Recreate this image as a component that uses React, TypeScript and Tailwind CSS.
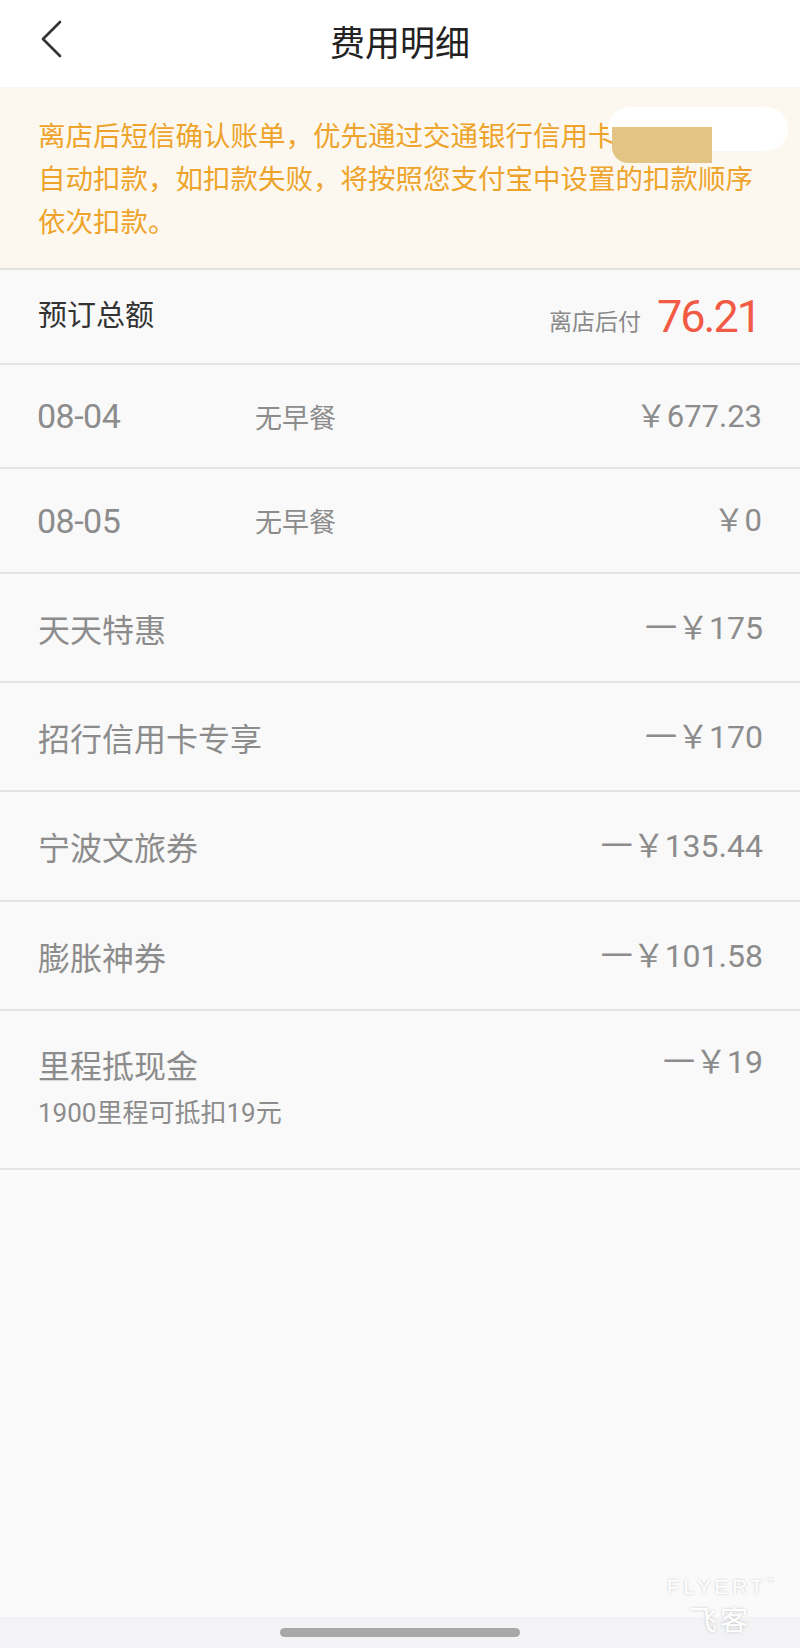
import React from "react";

const CJK = "font-['Noto_Sans_CJK_SC','Noto_Sans',sans-serif]";
const NUM = "font-['Roboto','Noto_Sans_CJK_SC',sans-serif]";

function Row({
  h,
  label,
  amount,
}: {
  h: string;
  label: string;
  amount: string;
}) {
  return (
    <div
      className={`${h} box-border flex items-center justify-between border-b-2 border-[#e4e4e4] pl-[38px] pr-[37px]`}
    >
      <span className={`${CJK} text-[32px] leading-none text-[#8c8c8c]`}>{label}</span>
      <span className={`${NUM} text-[32px] leading-none text-[#8c8c8c]`}>{amount}</span>
    </div>
  );
}

function NightRow({ h, date, amount }: { h: string; date: string; amount: string }) {
  return (
    <div
      className={`${h} box-border flex items-center border-b-2 border-[#e4e4e4] pl-[37px] pr-[38px]`}
    >
      <span className={`${NUM} w-[218px] text-[34px] leading-none tracking-[-0.5px] text-[#8c8c8c]`}>
        {date}
      </span>
      <span className={`${CJK} text-[27px] leading-none text-[#8c8c8c]`}>无早餐</span>
      <span className={`${NUM} ml-auto text-[31px] leading-none text-[#8c8c8c]`}>{amount}</span>
    </div>
  );
}

export default function App() {
  return (
    <div className="relative flex h-[1648px] w-[800px] flex-col overflow-hidden bg-[#f9f9f9]">
      {/* Header */}
      <div className="relative flex h-[87px] shrink-0 items-center justify-center bg-white pb-[6px]">
        <svg
          className="absolute left-[40px] top-[20px]"
          width="22"
          height="38"
          viewBox="0 0 22 38"
          fill="none"
        >
          <polyline
            points="20,2 3,19 20,36"
            stroke="#333333"
            strokeWidth="2.6"
            strokeLinecap="round"
            strokeLinejoin="round"
          />
        </svg>
        <span className={`${CJK} text-[35px] leading-none text-[#222222]`}>费用明细</span>
      </div>

      {/* Notice banner */}
      <div className="relative box-border h-[183px] shrink-0 border-b-2 border-[#e2e2e2] bg-[#fcf8ef] pl-[38px] pt-[26px]">
        <div className={`${CJK} text-[27.5px] leading-[43px] text-[#eea42c]`}>
          <div className="whitespace-nowrap">离店后短信确认账单，优先通过交通银行信用卡</div>
          <div className="whitespace-nowrap">自动扣款，如扣款失败，将按照您支付宝中设置的扣款顺序</div>
          <div className="whitespace-nowrap">依次扣款。</div>
        </div>
        <div className="absolute left-[608px] top-[20px] h-[44px] w-[180px] rounded-[22px] bg-white" />
        <div className="absolute left-[612px] top-[40px] h-[36px] w-[100px] rounded-bl-[16px] bg-[#e3c484]" />
      </div>

      {/* Summary */}
      <div className="box-border flex h-[95px] shrink-0 items-center justify-between border-b-2 border-[#e4e4e4] pl-[38px] pr-[40px]">
        <span className={`${CJK} -mt-[6px] text-[29px] leading-none text-[#333333]`}>预订总额</span>
        <div className="flex items-center gap-[16px]">
          <span className={`${CJK} mt-[8px] text-[23px] leading-none text-[#8a8a8a]`}>离店后付</span>
          <span className={`${NUM} text-[45px] leading-none tracking-[-2px] text-[#f25a46]`}>76.21</span>
        </div>
      </div>

      <NightRow h="h-[104px]" date="08-04" amount="￥677.23" />
      <NightRow h="h-[105px]" date="08-05" amount="￥0" />

      <Row h="h-[109px]" label="天天特惠" amount="一￥175" />
      <Row h="h-[109px]" label="招行信用卡专享" amount="一￥170" />
      <Row h="h-[110px]" label="宁波文旅券" amount="一￥135.44" />
      <Row h="h-[109px]" label="膨胀神券" amount="一￥101.58" />

      {/* Mileage row */}
      <div className="box-border flex h-[159px] shrink-0 items-start justify-between border-b-2 border-[#e4e4e4] pl-[38px] pr-[37px] pt-[31px]">
        <div className="flex flex-col">
          <span className={`${CJK} text-[32px] leading-[44px] text-[#8c8c8c]`}>里程抵现金</span>
          <span className={`${NUM} mt-[9px] text-[26px] leading-[36px] text-[#8c8c8c]`}>
            1900里程可抵扣19元
          </span>
        </div>
        <span className={`${NUM} -mt-[2px] text-[32px] leading-[44px] text-[#8c8c8c]`}>一￥19</span>
      </div>

      <div className="flex-1 bg-[#fafafa]" />

      {/* Bottom gesture bar */}
      <div className="flex h-[31px] shrink-0 justify-center bg-[#f3f3f5] pt-[11px]">
        <div className="h-[9px] w-[240px] rounded-full bg-[#a8a8a8]" />
      </div>

      {/* Watermark */}
      <div className="pointer-events-none absolute left-[667px] top-[1576px] flex flex-col items-start text-white [text-shadow:0_0_3px_rgba(0,0,0,0.22)]">
        <div className="flex items-start">
          <span className="font-['Liberation_Sans',sans-serif] text-[21px] leading-none tracking-[3.5px]">
            FLYERT
          </span>
          <span className="font-['Liberation_Sans',sans-serif] -mt-[3px] text-[13px] leading-none">+</span>
        </div>
        <span className={`${CJK} ml-[22px] mt-[8px] text-[28px] leading-none tracking-[3px]`}>飞客</span>
      </div>
    </div>
  );
}
